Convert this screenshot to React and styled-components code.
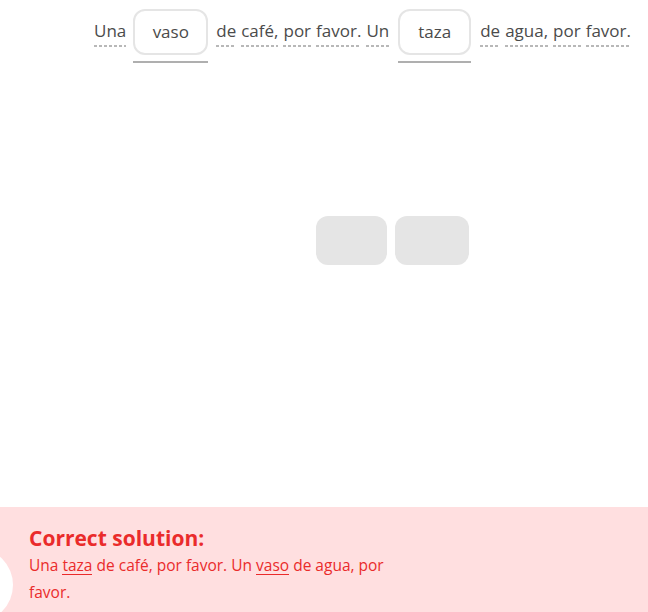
import React from "react";
import styled, { createGlobalStyle } from "styled-components";

const Global = createGlobalStyle`
  html, body { margin: 0; padding: 0; background: #fff; }
  body { font-family: "Open Sans", "Noto Sans", sans-serif; }
`;

const Page = styled.div`
  width: 648px;
  height: 612px;
  display: flex;
  flex-direction: column;
  overflow: hidden;
  position: relative;
`;

const Sentence = styled.div`
  display: flex;
  align-items: flex-start;
  justify-content: flex-end;
  padding: 9px 17px 0 0;
  height: 55px;
  color: #4b4b4b;
  font-size: 17px;
`;

const Phrase = styled.div`
  display: flex;
  gap: 5px;
  padding-top: 10px;
`;

const Word = styled.span`
  line-height: 24px;
  padding-bottom: 4px;
  background-image: linear-gradient(to right, #b8b8b8 60%, transparent 60%);
  background-size: 5px 2px;
  background-repeat: repeat-x;
  background-position: 0 100%;
`;

const Blank = styled.div`
  display: flex;
  flex-direction: column;
  align-items: stretch;
  margin: 0 ${(p) => p.mr}px 0 ${(p) => p.ml}px;
  width: ${(p) => p.w}px;
`;

const BlankBox = styled.div`
  height: 46px;
  border: 2px solid #e5e5e5;
  border-radius: 12px;
  display: flex;
  align-items: center;
  justify-content: center;
  box-sizing: border-box;
  font-size: 17px;
  color: #4b4b4b;
  padding-bottom: 1px;
`;

const BlankLine = styled.div`
  height: 2px;
  background: #afafaf;
  margin-top: 6px;
`;

const Bank = styled.div`
  display: flex;
  gap: 8px;
  padding-left: 316px;
  margin-top: 152px;
`;

const Slot = styled.div`
  width: ${(p) => p.w}px;
  height: 49px;
  border-radius: 12px;
  background: #e5e5e5;
`;

const Feedback = styled.div`
  margin-top: auto;
  height: 105px;
  background: #ffdfe0;
  position: relative;
  padding: 19px 0 0 29px;
  box-sizing: border-box;
  color: #ea2b2b;
`;

const Circle = styled.div`
  position: absolute;
  left: -61px;
  top: 41px;
  width: 74px;
  height: 74px;
  border-radius: 50%;
  background: #fff;
`;

const Title = styled.div`
  font-size: 21px;
  font-weight: 700;
  line-height: 24px;
`;

const Body = styled.div`
  font-size: 15.5px;
  line-height: 27px;
  max-width: 385px;
  margin-top: 2px;
`;

const U = styled.span`
  display: inline-block;
  line-height: 18px;
  border-bottom: 1px solid #ea2b2b;
`;

const words1 = ["Una"];
const words2 = ["de", "café,", "por", "favor.", "Un"];
const words3 = ["de", "agua,", "por", "favor."];

const Words = ({ list }) => (
  <Phrase>
    {list.map((w, i) => (
      <Word key={i}>{w}</Word>
    ))}
  </Phrase>
);

export default function App() {
  return (
    <>
      <Global />
      <Page>
        <Sentence>
          <Words list={words1} />
          <Blank w={75} ml={7} mr={8}>
            <BlankBox>vaso</BlankBox>
            <BlankLine />
          </Blank>
          <Words list={words2} />
          <Blank w={73} ml={9} mr={9}>
            <BlankBox>taza</BlankBox>
            <BlankLine />
          </Blank>
          <Words list={words3} />
        </Sentence>
        <Bank>
          <Slot w={71} />
          <Slot w={74} />
        </Bank>
        <Feedback>
          <Circle />
          <Title>Correct solution:</Title>
          <Body>
            Una <U>taza</U> de café, por favor. Un <U>vaso</U> de agua, por favor.
          </Body>
        </Feedback>
      </Page>
    </>
  );
}
